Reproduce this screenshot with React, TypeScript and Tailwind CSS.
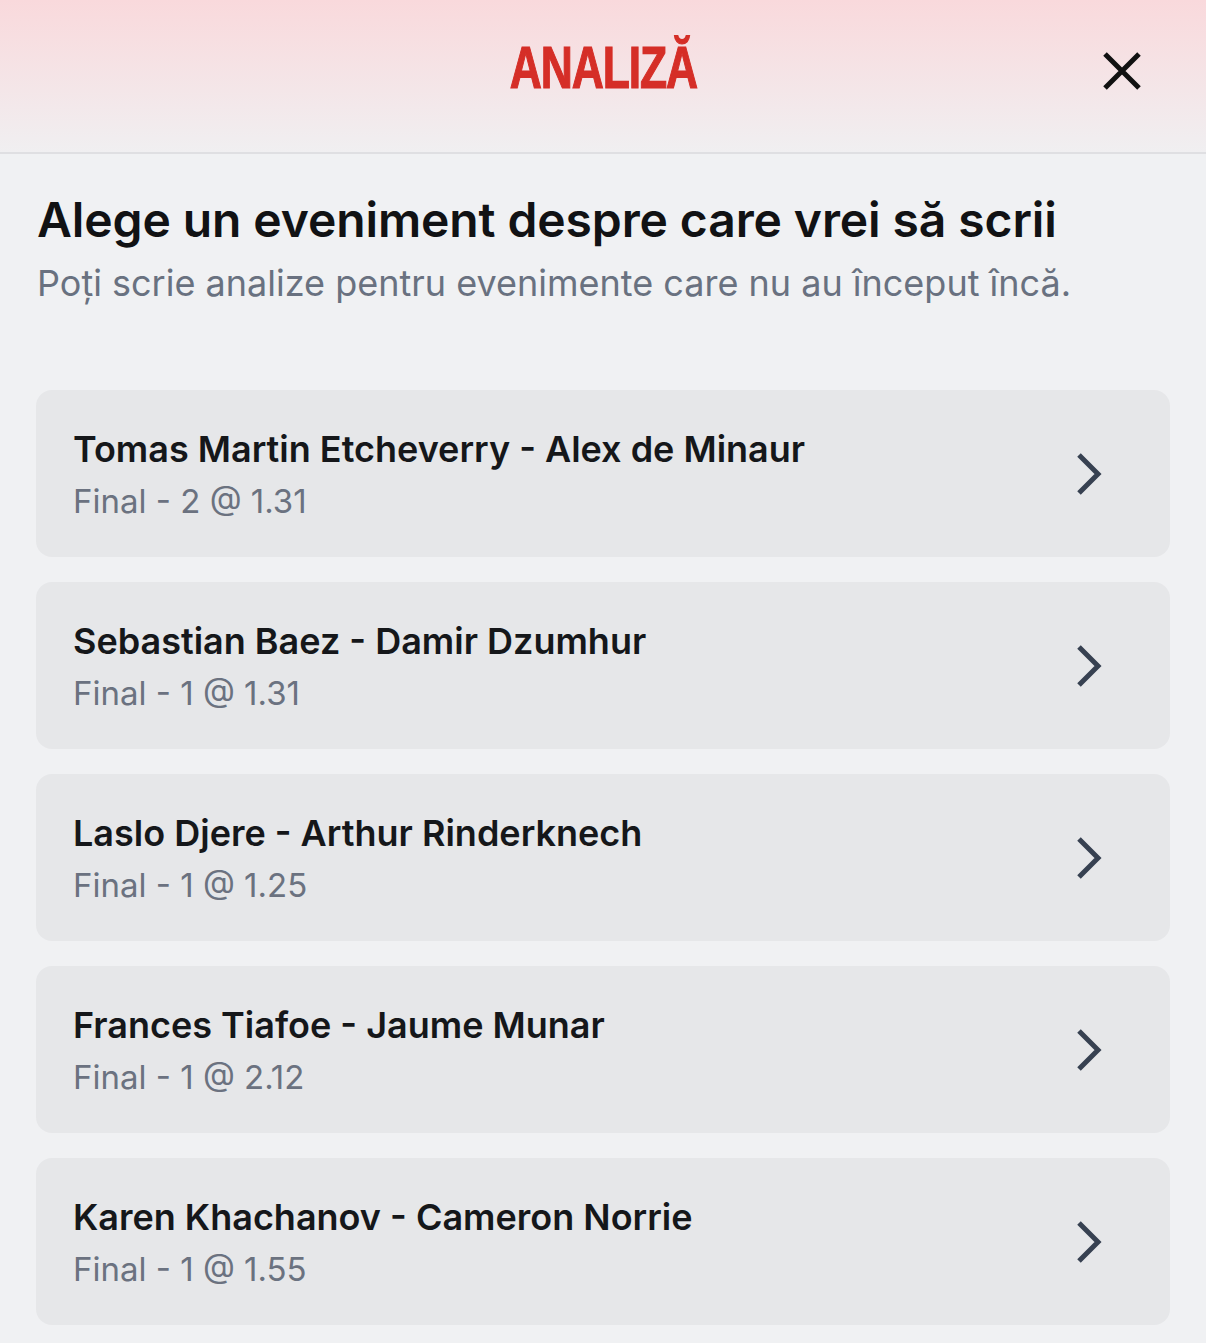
import React from "react";

const events = [
  { title: "Tomas Martin Etcheverry - Alex de Minaur", sub: "Final - 2 @ 1.31" },
  { title: "Sebastian Baez - Damir Dzumhur", sub: "Final - 1 @ 1.31" },
  { title: "Laslo Djere - Arthur Rinderknech", sub: "Final - 1 @ 1.25" },
  { title: "Frances Tiafoe - Jaume Munar", sub: "Final - 1 @ 2.12" },
  { title: "Karen Khachanov - Cameron Norrie", sub: "Final - 1 @ 1.55" },
];

function Chevron() {
  return (
    <svg width="30" height="44" viewBox="0 0 30 44" fill="none">
      <path d="M5 3 L24 22 L5 41" stroke="#374151" strokeWidth="5" strokeLinecap="butt" strokeLinejoin="miter" />
    </svg>
  );
}

export default function App() {
  return (
    <div className="w-[1206px] h-[1343px] overflow-hidden bg-[#f0f1f3]" style={{ fontFamily: "Inter, 'Noto Sans', sans-serif" }}>
      <header className="relative h-[154px] border-b-2 border-[#dfdfe2] bg-gradient-to-b from-[#f9d9dc] to-[#f0eff1] flex items-start justify-center">
        <div className="pt-[38px]">
          <span
            className="inline-block scale-x-[0.74] text-[60px] font-bold leading-none tracking-[-1.5px] text-[#d52e27] [-webkit-text-stroke:1.2px_#d52e27]"
            style={{ fontFamily: "'Liberation Sans', Arial, sans-serif" }}
          >
            ANALIZĂ
          </span>
        </div>
        <button className="absolute right-[62px] top-[49px] w-[44px] h-[44px] flex items-center justify-center">
          <svg width="40" height="40" viewBox="0 0 40 40">
            <path d="M3 3 L37 37 M37 3 L3 37" stroke="#111" strokeWidth="5" />
          </svg>
        </button>
      </header>
      <main className="px-[36px]">
        <h1 className="pt-[38px] pl-[1px] text-[48px] font-semibold leading-[56px] text-[#111214] tracking-[-0.1px]">
          Alege un eveniment despre care vrei să scrii
        </h1>
        <p className="mt-[13px] pl-[1px] text-[36px] leading-[44px] text-[#697180]">
          Poți scrie analize pentru evenimente care nu au început încă.
        </p>
        <div className="mt-[85px] flex flex-col gap-[25px]">
          {events.map((e) => (
            <div key={e.title} className="h-[167px] rounded-[16px] bg-[#e6e7e9] flex items-center pl-[37px] pr-[66px]">
              <div className="flex-1">
                <div className="text-[36px] font-semibold leading-[44px] text-[#15171a]">{e.title}</div>
                <div className="mt-[10px] text-[33px] leading-[40px] text-[#6b7280]">{e.sub}</div>
              </div>
              <Chevron />
            </div>
          ))}
        </div>
      </main>
    </div>
  );
}
